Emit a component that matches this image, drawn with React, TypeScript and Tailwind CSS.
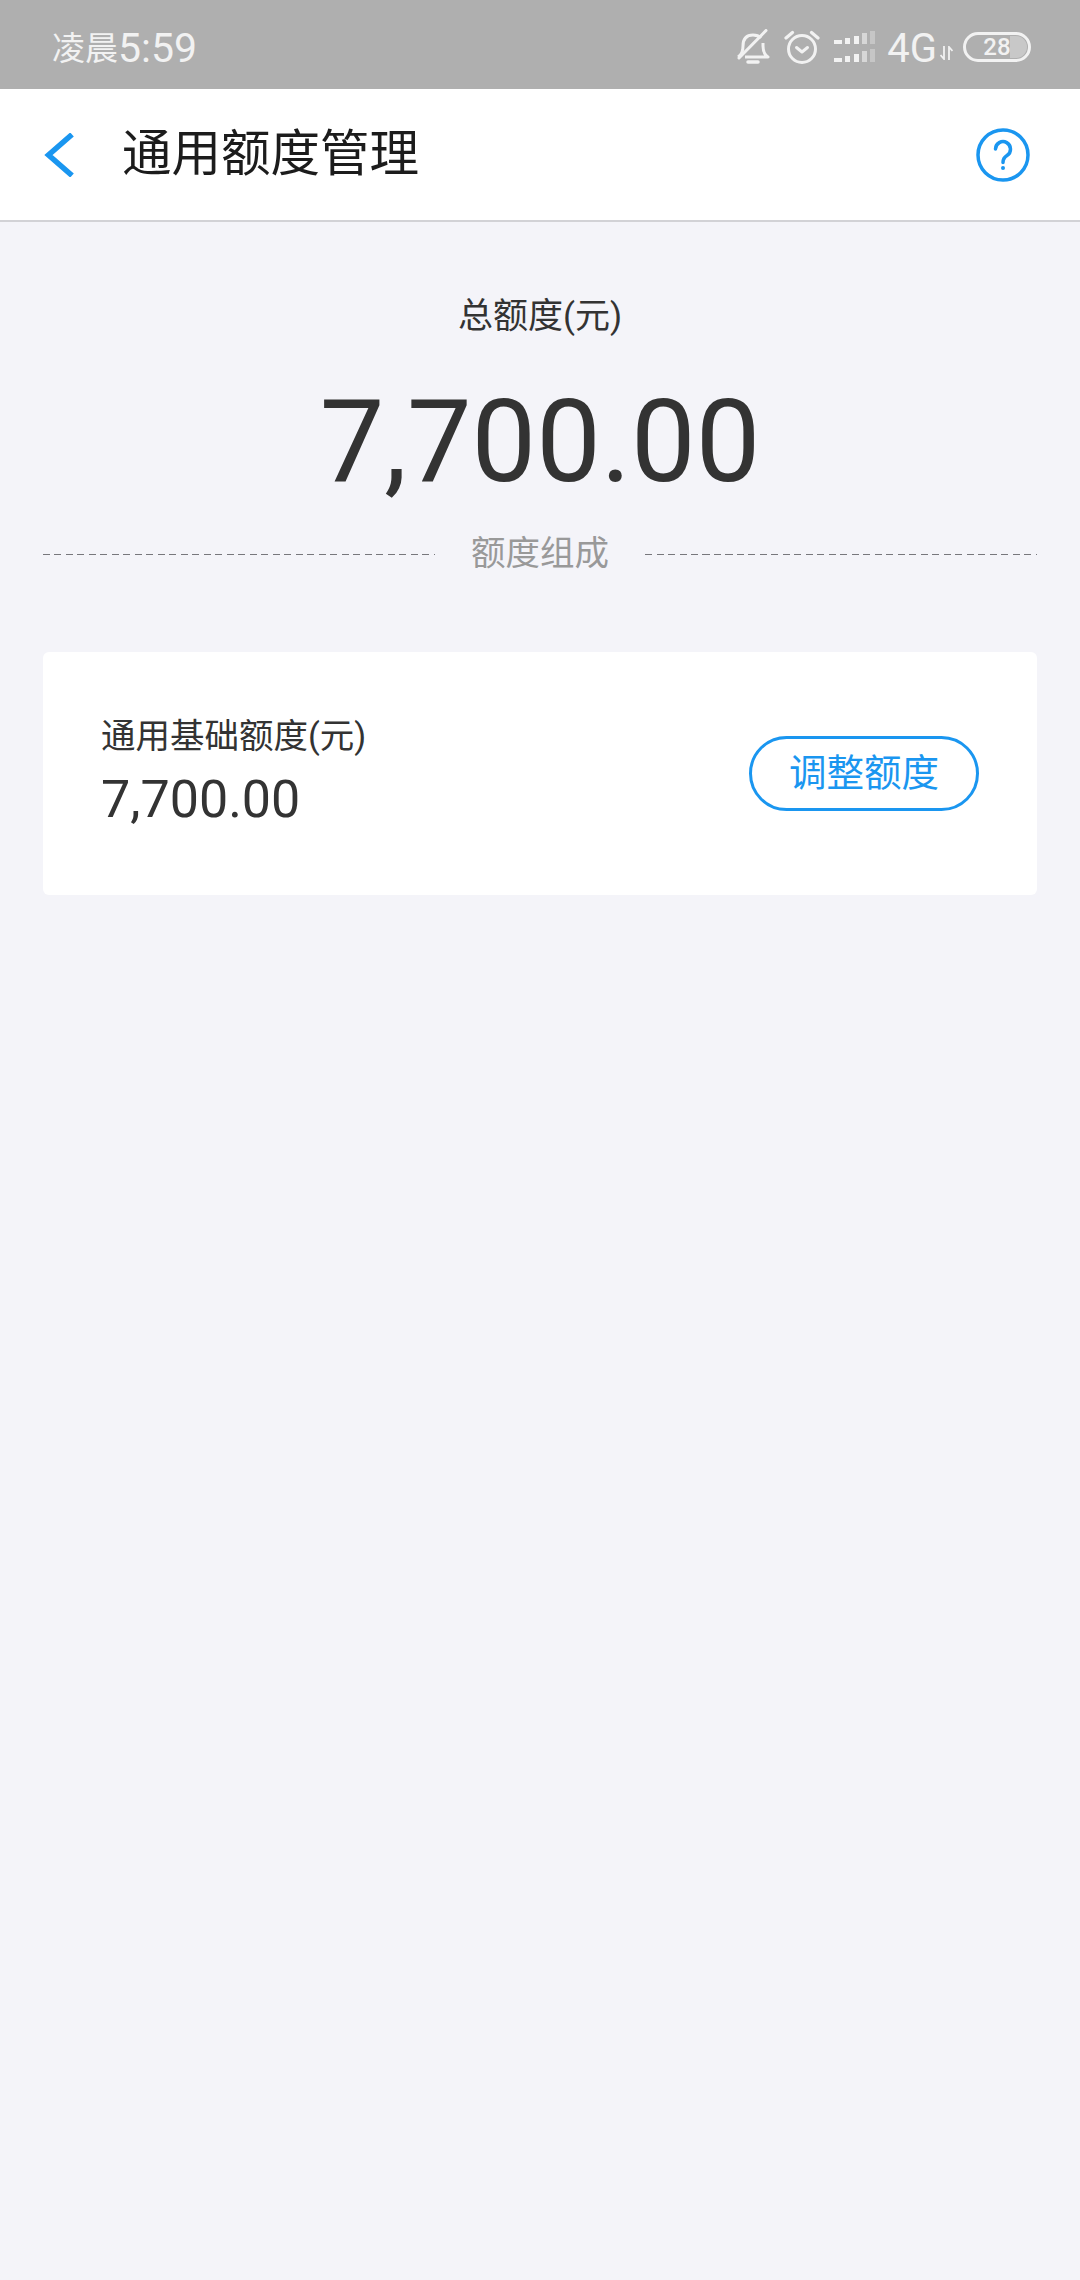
import React from 'react';

const FONT = 'font-["Roboto","Noto_Sans_CJK_SC",sans-serif]';

function BellOff() {
  return (
    <svg width="34" height="36" viewBox="0 0 34 36" fill="none" stroke="#f2f2f2" strokeWidth="3">
      <path d="M2 28 q5-3 5-11 q0-11 10-11 q5 0 8 3 M27 14 v3 q0 8 5 11 H9" strokeLinejoin="round" />
      <path d="M3 29 L30 1.5" strokeLinecap="round" />
      <path d="M12 33 h10" strokeWidth="3.5" strokeLinecap="round" />
    </svg>
  );
}

function Alarm() {
  return (
    <svg width="36" height="34" viewBox="0 0 36 34" fill="none" stroke="#f2f2f2" strokeWidth="3" strokeLinecap="round">
      <circle cx="18" cy="19" r="13.5" />
      <path d="M12.5 17.5 L18 22 L23.5 17.5" strokeLinejoin="round" />
      <path d="M2 8 L8.5 2.5 M27.5 2.5 L34 8" strokeWidth="3.2" />
    </svg>
  );
}

// two SIM rows, five bars each, the last two dimmed
function Signal() {
  const bars = [
    { x: 0, w: 8, h: 4, o: 1 },
    { x: 11, w: 5, h: 6, o: 1 },
    { x: 20, w: 5, h: 8, o: 1 },
    { x: 28, w: 5, h: 11, o: 0.6 },
    { x: 36, w: 5, h: 13, o: 0.35 },
  ];
  return (
    <svg width="41" height="32" viewBox="0 0 41 32">
      {[13, 31].map((bottom) =>
        bars.map((b) => (
          <rect key={`${bottom}-${b.x}`} x={b.x} y={bottom - b.h} width={b.w} height={b.h} fill="#f2f2f2" fillOpacity={b.o} />
        ))
      )}
    </svg>
  );
}

function Arrows() {
  return (
    <svg width="13" height="14" viewBox="0 0 13 14" fill="none" stroke="#f2f2f2" strokeWidth="1.8">
      <path d="M4 0 V13 L0.5 9" />
      <path d="M9 14 V1 L12.5 5" />
    </svg>
  );
}

function Battery() {
  return (
    <div className="relative w-[68px] h-[30px] rounded-full border-[3px] border-[#f2f2f2] flex items-center justify-center">
      <div className="absolute right-[1px] top-[1px] bottom-[1px] w-[17px] rounded-r-full bg-[#c8c8c8]" />
      <span className="relative text-[24px] leading-none font-medium text-[#f2f2f2]">28</span>
    </div>
  );
}

function DashLine() {
  return <div className="flex-1 mt-[2px] h-px bg-[repeating-linear-gradient(90deg,#77777c_0_7px,transparent_7px_11.5px)]" />;
}

export default function App() {
  return (
    <div className={`w-[1080px] h-[2280px] bg-[#f4f4f9] overflow-hidden ${FONT}`}>
      {/* status bar */}
      <div className="h-[89px] bg-[#afafaf] flex items-center justify-between pl-[52px] pr-[49px]">
        <span className="flex items-center mt-[8px] text-[#f2f2f2] leading-none">
          <span className="text-[33px]">凌晨</span>
          <span className="text-[41px]">5:59</span>
        </span>
        <div className="flex items-center mt-[4px]">
          <BellOff />
          <div className="ml-[14px]"><Alarm /></div>
          <div className="ml-[14px]"><Signal /></div>
          <span className="ml-[12px] mt-[4px] text-[40px] leading-none text-[#f2f2f2]">4G</span>
          <div className="ml-[3px] mt-[12px]"><Arrows /></div>
          <div className="ml-[10px]"><Battery /></div>
        </div>
      </div>

      {/* nav bar */}
      <div className="h-[133px] bg-white border-b-2 border-[#d2d2d6] flex items-center justify-between pl-[44px] pr-[50px]">
        <div className="flex items-center">
          <svg width="32" height="44" viewBox="0 0 32 44" fill="none" stroke="#1a96f0" strokeWidth="5.5">
            <path d="M28 1.5 L4.5 22 L28 42.5" />
          </svg>
          <span className="ml-[46px] text-[49.5px] leading-none text-[#1c1c1c]">通用额度管理</span>
        </div>
        <svg width="54" height="54" viewBox="0 0 54 54" fill="none" stroke="#1a96f0" strokeWidth="3.5">
          <circle cx="27" cy="27" r="25" />
          <path d="M19.5 21 a7.5 7.5 0 1 1 11.5 6.5 q-4 2.5-4 7" strokeLinecap="round" />
          <circle cx="27" cy="40" r="2" fill="#1a96f0" stroke="none" />
        </svg>
      </div>

      {/* total */}
      <div className="mt-[73px] text-center text-[35px] leading-[44px] text-[#333333]">总额度(元)</div>
      <div className="mt-[38px] text-center text-[115px] leading-[130px] text-[#333333]">7,700.00</div>

      <div className="mt-[24px] mx-[43px] flex items-center">
        <DashLine />
        <span className="mx-[36px] text-[34.5px] leading-[44px] text-[#999999]">额度组成</span>
        <DashLine />
      </div>

      {/* card */}
      <div className="mt-[77px] mx-[43px] h-[243px] bg-white rounded-[6px] flex items-center justify-between pl-[58px] pr-[58px]">
        <div className="-mt-[3px]">
          <div className="text-[34.5px] leading-[44px] text-[#333333]">通用基础额度(元)</div>
          <div className="mt-[12px] text-[52px] leading-[60px] text-[#333333]">7,700.00</div>
        </div>
        <div className="w-[230px] h-[75px] rounded-full border-[3px] border-[#1a96f0] flex items-center justify-center text-[37.5px] text-[#1a96f0]">
          调整额度
        </div>
      </div>
    </div>
  );
}
